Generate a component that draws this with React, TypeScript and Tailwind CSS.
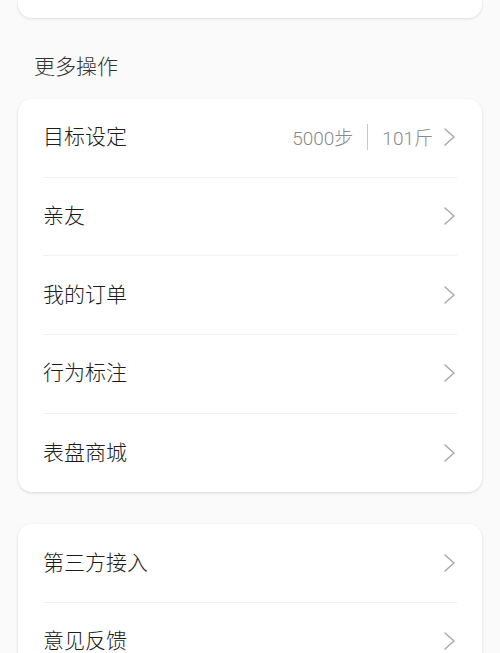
import React from "react";

const Chevron = () => (
  <svg width="14" height="20" viewBox="0 0 14 20" fill="none" className="shrink-0">
    <path d="M2 2 L11 10 L2 18" stroke="#a8a8a8" strokeWidth="1.5" strokeLinecap="round" strokeLinejoin="round" />
  </svg>
);

type RowProps = { label: string; right?: React.ReactNode; last?: boolean };

const Row = ({ label, right, last }: RowProps) => (
  <div className="h-[78.7px] flex flex-col">
    <div className="flex-1 flex items-center justify-between pb-[4px]">
      <span className="text-[21px] text-[#1c1c1c] leading-none font-light">{label}</span>
      <div className="flex items-center gap-[6px] pt-[3px]">
        {right}
        <Chevron />
      </div>
    </div>
    {!last && <div className="h-px bg-[#f0f0f0]" />}
  </div>
);

export default function App() {
  return (
    <div
      className="w-[500px] h-[653px] bg-[#fafafa] overflow-hidden"
      style={{ fontFamily: '"Noto Sans CJK SC", "Noto Sans", sans-serif' }}
    >
      <div className="mx-[18px] h-[19px] -mt-px bg-white rounded-b-[14px] shadow-[0_1px_3px_rgba(0,0,0,0.12)]" />
      <div className="h-[81px] pl-[34px] flex items-center pt-[14px]">
        <span className="text-[21px] text-[#333] leading-none font-light">更多操作</span>
      </div>
      <div className="mx-[18px] bg-white rounded-[14px] shadow-[0_1px_3px_rgba(0,0,0,0.14)] px-[25px]">
        <Row
          label="目标设定"
          right={
            <div className="flex items-center text-[19px] text-[#8a8a8a] leading-none mr-[4px] font-light">
              <span>
                <span className="font-['Roboto']">5000</span>步
              </span>
              <span className="mx-[14px] w-px h-[26px] bg-[#c8c8c8]" />
              <span>
                <span className="font-['Roboto']">101</span>斤
              </span>
            </div>
          }
        />
        <Row label="亲友" />
        <Row label="我的订单" />
        <Row label="行为标注" />
        <Row label="表盘商城" last />
      </div>
      <div className="mt-[32px] mx-[18px] bg-white rounded-[14px] shadow-[0_1px_3px_rgba(0,0,0,0.14)] px-[25px]">
        <Row label="第三方接入" />
        <Row label="意见反馈" />
      </div>
    </div>
  );
}
